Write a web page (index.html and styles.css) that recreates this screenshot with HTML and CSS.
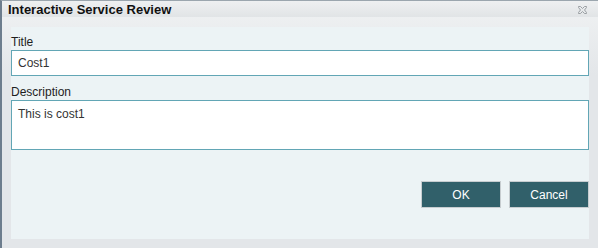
FILE: index.html
```html
<!DOCTYPE html>
<html lang="en">

<head>
    <meta charset="UTF-8">
    <title>Interactive Service Review</title>
    <link rel="stylesheet" href="styles.css">
</head>

<body>
    <div class="dialog">
        <div class="titlebar">
            <span class="title">Interactive Service Review</span>
            <span class="close-button">
                <svg width="9" height="8" viewBox="0 0 9 8">
                    <path d="M0.5 0.5 H2.5 L4.5 2.5 L6.5 0.5 H8.5 V1.5 L6.5 4 L8.5 6.5 V7.5 H6.5 L4.5 5.5 L2.5 7.5 H0.5 V6.5 L2.5 4 L0.5 1.5 Z" fill="none" stroke="#9a9fa3" stroke-width="1"/>
                </svg>
            </span>
        </div>
        <div class="dialog-body">
            <div class="panel">
                <label for="title">Title</label>
                <input type="text" id="title" value="Cost1">
                <label for="description" class="second">Description</label>
                <textarea id="description">This is cost1</textarea>
                <div class="buttons">
                    <button>OK</button>
                    <button>Cancel</button>
                </div>
            </div>
        </div>
    </div>
</body>

</html>
```

FILE: styles.css
```css
body {
    margin: 0;
    background-color: white;
    font-family: "Liberation Sans", Arial, sans-serif;
}

.dialog {
    width: 596px;
    height: 247px;
    border-left: 2px solid #6d7d8d;
    border-top: 1px solid #9ba6ae;
    background: linear-gradient(#f0f2f3, #e3e6e9 30%);
    display: flex;
    flex-direction: column;
}

.titlebar {
    height: 17px;
    display: flex;
    justify-content: space-between;
    align-items: center;
    padding: 0 11px 0 6px;
    background: linear-gradient(#eef0f1, #e1e4e6);
}

.title {
    font-weight: bold;
    font-size: 13px;
    color: #111;
}

.close-button svg {
    display: block;
    margin-top: 1px;
}

.dialog-body {
    padding: 10px 9px 9px 9px;
}

.panel {
    background-color: #ecf3f5;
    padding: 7px 0 31px 0;
    display: flex;
    flex-direction: column;
}

label {
    font-size: 12px;
    line-height: 16px;
    color: #1e1e1e;
}

label.second {
    margin-top: 8px;
}

input,
textarea {
    margin: 0;
    border: 1px solid #62a6b5;
    background: white;
    font-family: "Liberation Sans", Arial, sans-serif;
    font-size: 12px;
    color: #333;
    padding: 0 6px;
    box-sizing: border-box;
    width: 100%;
    outline: none;
}

input {
    height: 26px;
}

textarea {
    height: 50px;
    padding-top: 6px;
    resize: none;
}

.buttons {
    display: flex;
    justify-content: flex-end;
    gap: 8px;
    margin-top: 31px;
}

button {
    width: 80px;
    height: 27px;
    background: #31606a;
    border: 1px solid #c7cdd0;
    color: white;
    font-family: "Liberation Sans", Arial, sans-serif;
    font-size: 12px;
    cursor: pointer;
}
```
